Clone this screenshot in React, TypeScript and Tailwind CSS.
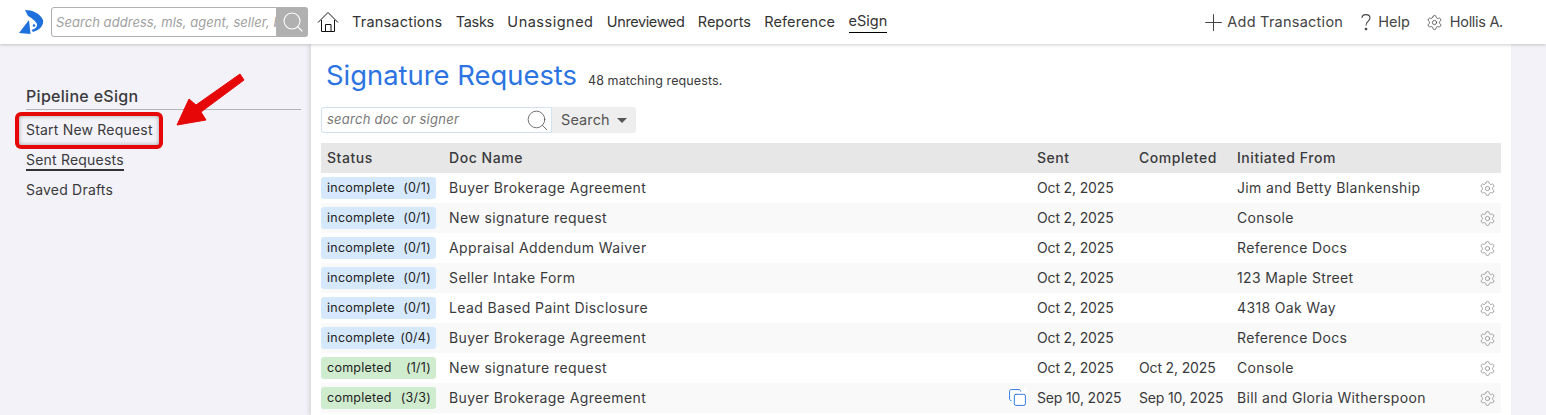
import React from "react";
import { Plus, Settings, Search, Copy } from "lucide-react";

const rows = [
  { status: "incomplete", count: "(0/1)", doc: "Buyer Brokerage Agreement", sent: "Oct 2, 2025", done: "", from: "Jim and Betty Blankenship" },
  { status: "incomplete", count: "(0/1)", doc: "New signature request", sent: "Oct 2, 2025", done: "", from: "Console" },
  { status: "incomplete", count: "(0/1)", doc: "Appraisal Addendum Waiver", sent: "Oct 2, 2025", done: "", from: "Reference Docs" },
  { status: "incomplete", count: "(0/1)", doc: "Seller Intake Form", sent: "Oct 2, 2025", done: "", from: "123 Maple Street" },
  { status: "incomplete", count: "(0/1)", doc: "Lead Based Paint Disclosure", sent: "Oct 2, 2025", done: "", from: "4318 Oak Way" },
  { status: "incomplete", count: "(0/4)", doc: "Buyer Brokerage Agreement", sent: "Oct 2, 2025", done: "", from: "Reference Docs" },
  { status: "completed", count: "(1/1)", doc: "New signature request", sent: "Oct 2, 2025", done: "Oct 2, 2025", from: "Console" },
  { status: "completed", count: "(3/3)", doc: "Buyer Brokerage Agreement", sent: "Sep 10, 2025", done: "Sep 10, 2025", from: "Bill and Gloria Witherspoon", copy: true },
];

const navItems = [
  { label: "Transactions", cls: "tracking-[0.2px]" },
  { label: "Tasks", cls: "tracking-[-0.3px]" },
  { label: "Unassigned", cls: "tracking-[0.5px]" },
  { label: "Unreviewed", cls: "tracking-[-0.4px]" },
  { label: "Reports", cls: "" },
  { label: "Reference", cls: "tracking-[0.1px]" },
];

function Logo() {
  return (
    <svg width="26" height="28" viewBox="0 0 26 28" className="shrink-0">
      <path d="M7 2 C14 2 22 5 25 12 C26 17 22 22 15 24 L13.5 22 C17 21 19.5 19 19 16 C17 12 12 9 10 8 Z" fill="#1f6fdc" />
      <path d="M11 12 L12.5 26 L1 25 Z" fill="#1f6fdc" />
      <circle cx="16" cy="17.5" r="1.3" fill="#1f6fdc" />
    </svg>
  );
}

function HomeIcon() {
  return (
    <svg width="22" height="22" viewBox="0 0 22 22" fill="none" stroke="#111" strokeWidth="1" className="ml-[9px] shrink-0">
      <path d="M1 11.5 L11 1.5 L21 11.5 M4.5 9 V20.5 H17.5 V9 M8.5 20.5 V13.5 H14 V20.5" />
    </svg>
  );
}

export default function App() {
  return (
    <div className="relative h-[415px] w-[1546px] overflow-hidden bg-[#f3f2f8] font-['Inter',sans-serif] text-[#3a3a3c]">
      <header className="relative z-10 flex h-[44px] items-center bg-white pl-[18px] pr-[43px] shadow-[0_1px_3px_rgba(0,0,0,0.2)]">
        <Logo />
        <div className="ml-[7px] flex h-[30px] w-[257px] shrink-0">
          <input
            placeholder="Search address, mls, agent, seller, buyer"
            className="min-w-0 flex-1 rounded-l-[3px] border border-[#b0b0b0] pl-[4px] pt-[1px] text-[13px] italic tracking-[0.05px] placeholder:text-[#a0a0a0]"
          />
          <div className="flex w-[31px] items-center justify-center rounded-r-[3px] bg-[#b0b0b0]">
            <Search size={24} strokeWidth={1.1} className="text-white" />
          </div>
        </div>
        <HomeIcon />
        <nav className="ml-[13px] flex gap-[13.4px] text-[14.5px] text-[#333]">
          {navItems.map((n) => (
            <span key={n.label} className={n.cls}>
              {n.label}
            </span>
          ))}
          <span className="border-b border-black leading-[20px]">eSign</span>
        </nav>
        <div className="ml-auto flex items-center text-[14.5px] text-[#444]">
          <Plus size={27} strokeWidth={0.9} />
          <span className="ml-[0px] tracking-[0.25px]">Add Transaction</span>
          <svg width="12" height="20" viewBox="0 0 12 20" fill="none" stroke="#444" strokeWidth="1.1" className="ml-[17px]">
            <path d="M2 6 C2 1.5 10 1.5 10 6 C10 9 6 9.5 6 13.5" />
            <circle cx="6" cy="17" r="0.8" fill="#444" />
          </svg>
          <span className="ml-[6px]">Help</span>
          <Settings size={17} strokeWidth={1.1} className="ml-[16px]" />
          <span className="ml-[7px] tracking-[-0.3px]">Hollis A.</span>
        </div>
      </header>

      <div className="flex h-[371px]">
        <aside className="w-[311px] shrink-0 pl-[26px] pr-[10px] pt-[41px]">
          <div className="border-b border-[#b5b5b5] pb-[2px] text-[16px] font-medium leading-[22px] tracking-[0.3px]">Pipeline eSign</div>
          <ul className="mt-[5px] text-[14px] tracking-[0.2px]">
            <li className="flex h-[30px] items-center pb-[2px]">Start New Request</li>
            <li className="flex h-[30px] items-center pt-[1px]">
              <span className="border-b-2 border-[#333] leading-[18px]">Sent Requests</span>
            </li>
            <li className="flex h-[30px] items-center pb-[2px]">Saved Drafts</li>
          </ul>
        </aside>

        <main className="w-[1200px] shrink-0 bg-white pl-[10px] pr-[10px] shadow-[-2px_0_4px_rgba(0,0,0,0.12)]">
          <div className="flex h-[63px] items-center pl-[5px] pt-[1px]">
            <h1 className="text-[27.4px] text-[#2b74e2]">Signature Requests</h1>
            <span className="ml-[11px] mt-[11px] text-[12.5px] tracking-[0.1px]">48 matching requests.</span>
          </div>
          <div className="flex h-[26px]">
            <div className="flex w-[231px] items-center justify-between rounded-l-[3px] border border-[#d3e2f3] pl-[5px] pr-[1px] text-[13px] italic tracking-[0.25px] text-[#777]">
              search doc or signer
              <Search size={25} strokeWidth={0.8} className="text-[#555]" />
            </div>
            <div className="flex w-[84px] items-center gap-[7px] rounded-r-[3px] bg-[#eeeeee] pl-[9px] text-[14.5px] tracking-[0.1px] text-[#555]">
              Search
              <span className="h-0 w-0 border-x-[5.5px] border-t-[5px] border-x-transparent border-t-[#555]" />
            </div>
          </div>

          <table className="mt-[10px] w-[1180px] table-fixed border-collapse text-[14px]">
            <colgroup>
              <col className="w-[128px]" />
              <col className="w-[588px]" />
              <col className="w-[102px]" />
              <col className="w-[98px]" />
              <col className="w-[238px]" />
              <col className="w-[26px]" />
            </colgroup>
            <thead>
              <tr className="h-[30px] bg-[#e7e7e7] text-left tracking-[0.55px]">
                <th className="pb-[1px] pl-[6px] font-medium">Status</th>
                <th className="pb-[1px] font-medium">Doc Name</th>
                <th className="pb-[1px] font-medium">Sent</th>
                <th className="pb-[1px] font-medium">Completed</th>
                <th className="pb-[1px] font-medium">Initiated From</th>
                <th />
              </tr>
            </thead>
            <tbody>
              {rows.map((r, i) => (
                <tr key={i} className={i % 2 === 1 ? "h-[30px] bg-[#f9f9f9]" : "h-[30px]"}>
                  <td>
                    <div
                      className={
                        r.status === "completed"
                          ? "flex h-[22px] w-[115px] items-center justify-between rounded-[3px] bg-[#d0eccf] pl-[6px] pr-[5px] text-[12.5px] tracking-[0.25px] text-[#222]"
                          : "flex h-[22px] w-[115px] items-center justify-between rounded-[3px] bg-[#d6e9fc] pl-[6px] pr-[5px] text-[12.5px] tracking-[0.25px] text-[#222]"
                      }
                    >
                      <span>{r.status}</span>
                      <span>{r.count}</span>
                    </div>
                  </td>
                  <td className="pb-[1px] tracking-[0.4px]">
                    <div className="flex items-center justify-between pr-[10px]">
                      <span>{r.doc}</span>
                      {r.copy && <Copy size={19} strokeWidth={1.2} className="bg-white text-[#2b74e2]" />}
                    </div>
                  </td>
                  <td className="pb-[1px] tracking-[-0.15px]">{r.sent}</td>
                  <td className="pb-[1px] tracking-[-0.15px]">{r.done}</td>
                  <td className="pb-[1px] tracking-[0.35px]">{r.from}</td>
                  <td>
                    <Settings size={17} strokeWidth={1} className="ml-[4px] text-[#808080]" />
                  </td>
                </tr>
              ))}
            </tbody>
          </table>
        </main>
      </div>

      {/* annotation */}
      <div className="absolute left-[15px] top-[112px] h-[37px] w-[148px] rounded-[6px] border-[4px] border-[#e60808] shadow-[inset_0_0_4px_rgba(0,0,0,0.35)]" />
      <svg className="absolute left-[170px] top-[70px]" width="80" height="60" viewBox="0 0 80 60">
        <path d="M70 4 L74 10 L31 42 L36 50 L7 55 L19 29 L26 35 Z" fill="#e60808" stroke="#e60808" strokeWidth="1" strokeLinejoin="round" />
      </svg>
    </div>
  );
}
